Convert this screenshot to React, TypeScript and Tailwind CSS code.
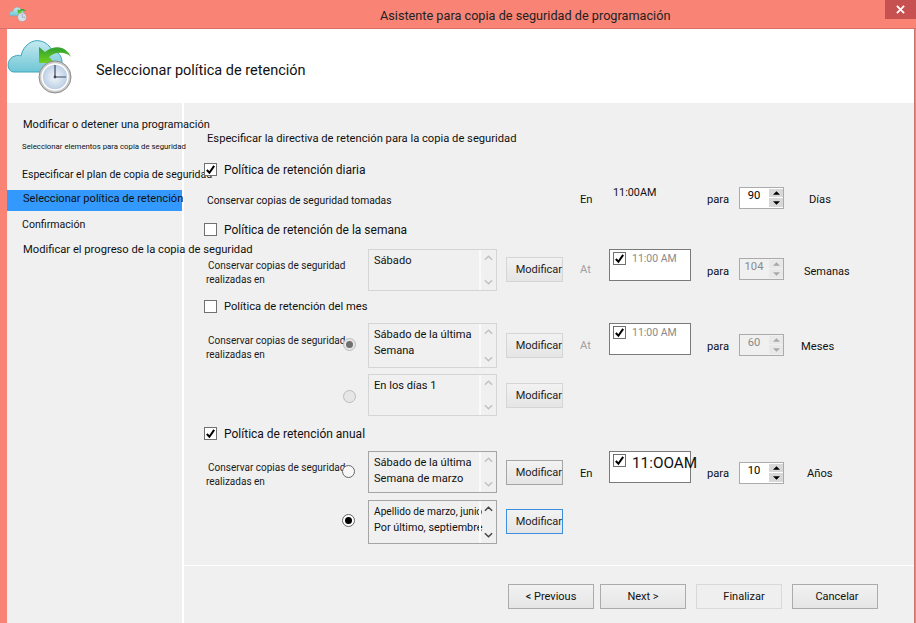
import { ReactNode } from "react";

function BackupIcon({ className }: { className: string }) {
  return (
    <svg viewBox="0 0 66 54" className={className}>
      <defs>
        <linearGradient id="cloud" x1="0" y1="0" x2="0" y2="1">
          <stop offset="0" stopColor="#c4eaf0" />
          <stop offset="1" stopColor="#6fc6d6" />
        </linearGradient>
        <linearGradient id="arrow" x1="0" y1="0" x2="0" y2="1">
          <stop offset="0" stopColor="#2f9e2f" />
          <stop offset="1" stopColor="#6fd01f" />
        </linearGradient>
        <radialGradient id="face">
          <stop offset="0" stopColor="#f4f7fb" />
          <stop offset="1" stopColor="#b9cde4" />
        </radialGradient>
      </defs>
      <path
        d="M7 32 C-1 32 -1 18 8 16 C10 15 12 15 14 16 C16 5 26 -1 33 1 C39 2 43 6 45 11 C51 11 55 16 55 22 C55 28 52 32 48 32 Z"
        fill="url(#cloud)"
        stroke="#3fa6bd"
        strokeWidth="1"
      />
      <path d="M32 7 L32 23 L48 23 L42 17 C47 12 58 11 64 17 C60 8 50 3 38 12 Z" fill="url(#arrow)" />
      <circle cx="48" cy="37" r="16" fill="#c9c9c9" stroke="#8d8d8d" strokeWidth="1" />
      <circle cx="48" cy="37" r="13" fill="url(#face)" stroke="#ffffff" strokeWidth="1.5" />
      <path d="M48 25 V37 H59" fill="none" stroke="#3b4a63" strokeWidth="1.2" />
      <circle cx="48" cy="37" r="1.4" fill="#3b4a63" />
    </svg>
  );
}

function Check({ className }: { className: string }) {
  return (
    <svg viewBox="0 0 12 12" className={className}>
      <path d="M2 6.5 L4.8 9.5 L10 2" fill="none" stroke="#000" strokeWidth="2.2" />
    </svg>
  );
}

function CheckBox({ checked }: { checked?: boolean }) {
  return (
    <span className="flex w-[13px] h-[13px] shrink-0 items-center justify-center border border-[#707070] bg-white">
      {checked && <Check className="w-[11px] h-[11px]" />}
    </span>
  );
}

function Radio({ state }: { state: "on" | "off" | "disabledOn" | "disabledOff" }) {
  const ring =
    state === "on"
      ? "border-[#666] bg-white"
      : state === "off"
        ? "border-[#666] bg-[#f7f7f7]"
        : "border-[#bcbcbc] bg-[#e6e6e6]";
  return (
    <span className={"flex w-[13px] h-[13px] items-center justify-center rounded-full border " + ring}>
      {state === "on" && <span className="w-[7px] h-[7px] rounded-full bg-black" />}
      {state === "disabledOn" && <span className="w-[7px] h-[7px] rounded-full bg-[#707070]" />}
    </span>
  );
}

function ListBox({
  lines,
  dark,
  className,
  small,
}: {
  lines: ReactNode[];
  dark?: boolean;
  className: string;
  small?: boolean;
}) {
  return (
    <div
      className={
        "relative flex w-[129px] shrink-0 border bg-[#f0f0f0] " +
        (dark ? "border-[#a5a5a5] " : "border-[#d5d5d5] ") +
        className
      }
    >
      <div className="w-[110px] shrink-0 pl-[5px] pt-[3px] text-[11.1px] leading-[16px] text-[#111] whitespace-nowrap">
        {small ? (
          <>
            <div className="text-[10.2px] leading-[16px]">{lines[0]}</div>
            <div className="text-[10.8px]">{lines[1]}</div>
          </>
        ) : (
          lines.map((l, i) => <div key={i}>{l}</div>)
        )}
      </div>
      <div className="flex w-[17px] shrink-0 flex-col items-center justify-between border-l-2 border-[#fafafa] py-[5px]">
        <svg viewBox="0 0 10 6" className="w-[9px] h-[6px]">
          <path d="M1 5 L5 1 L9 5" fill="none" stroke={small ? "#444" : "#c0c0c0"} strokeWidth="1.6" />
        </svg>
        <svg viewBox="0 0 10 6" className="w-[9px] h-[6px]">
          <path d="M1 1 L5 5 L9 1" fill="none" stroke={small ? "#444" : "#c0c0c0"} strokeWidth="1.6" />
        </svg>
      </div>
    </div>
  );
}

function ModifyButton({ className }: { className: string }) {
  return (
    <div
      className={
        "flex w-[57px] h-[25px] shrink-0 items-center justify-end pt-[2px] border bg-gradient-to-b from-[#f2f2f2] to-[#e5e5e5] text-[11px] text-[#222] " +
        className
      }
    >
      Modificar
    </div>
  );
}

function Spinner({ value, disabled, className }: { value: string; disabled?: boolean; className: string }) {
  const arrow = disabled ? "#a8a8a8" : "#000";
  return (
    <div
      className={
        "flex w-[45px] h-[22px] shrink-0 items-start border border-[#ababab] " +
        (disabled ? "bg-[#f0f0f0] text-[#8a8a8a] " : "bg-white text-black ") +
        className
      }
    >
      <span className="w-[28px] text-center text-[11.2px] leading-[16px]">{value}</span>
      <span className="ml-[1px] mt-[1px] flex w-[14px] flex-col gap-[1px]">
        <span className={"flex h-[8px] items-center justify-center " + (disabled ? "bg-[#e8e8e8]" : "bg-[#d8d8d8]")}>
          <svg viewBox="0 0 8 4" className="w-[7px] h-[4px]">
            <path d="M0 4 L4 0 L8 4 Z" fill={arrow} />
          </svg>
        </span>
        <span className={"flex h-[9px] items-center justify-center " + (disabled ? "bg-[#e8e8e8]" : "bg-[#d8d8d8]")}>
          <svg viewBox="0 0 8 4" className="w-[7px] h-[4px]">
            <path d="M0 0 L8 0 L4 4 Z" fill={arrow} />
          </svg>
        </span>
      </span>
    </div>
  );
}

function TimeBox({ large }: { large?: boolean }) {
  return (
    <div className="flex w-[82px] h-[32px] shrink-0 items-start gap-[6px] border border-[#7a7a7a] bg-white pl-[3px] pt-[2px] whitespace-nowrap">
      <CheckBox checked />
      {large ? (
        <span className="text-[15.3px] leading-[18px] text-[#111]">11:OOAM</span>
      ) : (
        <span className="text-[10.5px] leading-[14px] text-[#8a8a8a]">11:00 AM</span>
      )}
    </div>
  );
}

function KeepLabel({ className }: { className: string }) {
  return (
    <div className={"text-[10px] leading-[14px] text-[#1a1a1a] whitespace-nowrap " + className}>
      <div className="pl-[4px]">Conservar copias de seguridad</div>
      <div className="pl-[2px]">realizadas en</div>
    </div>
  );
}

const navItems = [
  { label: "Modificar o detener una programación", cls: "h-[22px] pt-[2px] pl-[16px] text-[11px]" },
  { label: "Seleccionar elementos para copia de seguridad", cls: "h-[22px] pt-[2px] pl-[15px] text-[7.8px]" },
  { label: "Especificar el plan de copia de seguridad", cls: "h-[33px] pt-[3px] pl-[15px] text-[10.5px]" },
  { label: "Seleccionar política de retención", cls: "h-[21px] pb-[2px] pl-[16px] text-[11.1px] bg-[#3399ff]" },
  { label: "Confirmación", cls: "h-[26px] pt-[2px] pl-[15px] text-[10.6px]" },
  { label: "Modificar el progreso de la copia de seguridad", cls: "h-[24px] pt-[2px] pl-[16px] text-[11.2px]" },
];

export default function App() {
  return (
    <div className="flex h-[623px] w-[916px] flex-col overflow-hidden bg-[#f98375] font-['Roboto',sans-serif] text-[#111]">
      {/* Barra de titulo */}
      <div className="relative flex h-[29px] shrink-0 items-start border-b border-[#d9736a]">
        <BackupIcon className="ml-[9px] mt-[6px] h-[17px] w-[18px]" />
        <div className="flex-1 pt-[7px] pl-[353px] text-[12.7px] leading-[18px] text-[#222] whitespace-nowrap">
          Asistente para copia de seguridad de programación
        </div>
        <div className="flex h-[19px] w-[31px] items-center justify-center bg-[#c75050]">
          <svg viewBox="0 0 10 10" className="h-[9px] w-[9px]">
            <path d="M1 1 L9 9 M9 1 L1 9" stroke="#fff" strokeWidth="2" />
          </svg>
        </div>
      </div>

      <div className="ml-[7px] mr-[1px] flex flex-1 flex-col border-r border-[#c9736b]">
        {/* Cabecera */}
        <div className="flex h-[74px] shrink-0 items-start bg-white">
          <BackupIcon className="mt-[11px] h-[54px] w-[66px]" />
          <div className="ml-[23px] mt-[32px] text-[14.5px] leading-[20px]">Seleccionar política de retención</div>
        </div>

        <div className="flex flex-1">
          {/* Pasos */}
          <div className="w-[175px] shrink-0 bg-[#f0f0f0] pt-[10px]">
            {navItems.map((n) => (
              <div key={n.label} className={"relative z-10 flex items-center whitespace-nowrap " + n.cls}>
                {n.label}
              </div>
            ))}
          </div>
          <div className="w-[2px] shrink-0 bg-white" />

          {/* Contenido */}
          <div className="flex flex-1 flex-col bg-[#f0f0f0] pt-[28px]">
            <div className="pl-[23px] text-[11.2px] leading-[16px] whitespace-nowrap">
              Especificar la directiva de retención para la copia de seguridad
            </div>

            {/* Diaria */}
            <div className="relative z-20 mt-[16px] flex h-[13px] items-center gap-[7px] pl-[20px] text-[12px]">
              <CheckBox checked />
              <span className="pt-[1px]">Política de retención diaria</span>
            </div>
            <div className="mt-[11px] flex h-[22px] text-[11.2px] leading-[14px] whitespace-nowrap">
              <div className="ml-[23px] mt-[7px] w-[373px] text-[10.3px]">Conservar copias de seguridad tomadas</div>
              <div className="mt-[6px] w-[33px]">En</div>
              <div className="-mt-[1px] w-[94px] text-[10.8px]">11:00AM</div>
              <div className="mt-[6px] w-[32px]">para</div>
              <Spinner value="90" className="" />
              <div className="ml-[25px] mt-[6px]">Días</div>
            </div>

            {/* Semana */}
            <div className="mt-[14px] flex h-[13px] items-center gap-[7px] pl-[20px] text-[12px]">
              <CheckBox />
              <span className="pt-[1px]">Política de retención de la semana</span>
            </div>
            <div className="mt-[13px] flex h-[42px] pl-[20px] whitespace-nowrap">
              <KeepLabel className="mt-[10px] w-[164px]" />
              <ListBox lines={["Sábado"]} className="h-[42px]" />
              <ModifyButton className="ml-[9px] mt-[8px] border-[#d5d5d5]" />
              <div className="ml-[17px] mt-[14px] w-[29px] text-[11.2px] leading-[14px] text-[#a0a0a0]">At</div>
              <TimeBox />
              <div className="ml-[16px] mt-[16px] w-[32px] text-[11.2px] leading-[14px]">para</div>
              <Spinner disabled value="104" className="mt-[9px]" />
              <div className="ml-[20px] mt-[16px] text-[11px] leading-[14px]">Semanas</div>
            </div>

            {/* Mes */}
            <div className="mt-[9px] flex h-[13px] items-center gap-[7px] pl-[20px] text-[11.2px]">
              <CheckBox />
              <span className="pt-[2px]">Política de retención del mes</span>
            </div>
            <div className="mt-[10px] flex h-[45px] pl-[20px] whitespace-nowrap">
              <KeepLabel className="mt-[11px] w-[139px]" />
              <div className="mt-[15px] w-[25px]">
                <Radio state="disabledOn" />
              </div>
              <ListBox lines={["Sábado de la última", "Semana"]} className="h-[45px]" />
              <ModifyButton className="ml-[9px] mt-[10px] border-[#d5d5d5]" />
              <div className="ml-[17px] mt-[16px] w-[29px] text-[11.2px] leading-[14px] text-[#a0a0a0]">At</div>
              <TimeBox />
              <div className="ml-[16px] mt-[17px] w-[32px] text-[11.2px] leading-[14px]">para</div>
              <Spinner disabled value="60" className="mt-[11px]" />
              <div className="ml-[17px] mt-[17px] text-[11.2px] leading-[14px]">Meses</div>
            </div>
            <div className="mt-[6px] flex h-[42px] pl-[159px]">
              <div className="mt-[16px] w-[25px]">
                <Radio state="disabledOff" />
              </div>
              <ListBox lines={["En los días 1"]} className="h-[42px]" />
              <ModifyButton className="ml-[9px] mt-[9px] border-[#d5d5d5]" />
            </div>

            {/* Anual */}
            <div className="mt-[11px] flex h-[13px] items-center gap-[7px] pl-[20px] text-[12px]">
              <CheckBox checked />
              <span className="pt-[1px]">Política de retención anual</span>
            </div>
            <div className="mt-[11px] flex h-[42px] pl-[20px] whitespace-nowrap">
              <KeepLabel className="mt-[10px] w-[138px] text-[10.3px]" />
              <div className="mt-[14px] w-[26px]">
                <Radio state="off" />
              </div>
              <ListBox dark lines={["Sábado de la última", "Semana de marzo"]} className="h-[42px]" />
              <ModifyButton className="ml-[9px] mt-[9px] border-[#a5a5a5]" />
              <div className="ml-[17px] mt-[16px] w-[29px] text-[11.2px] leading-[14px]">En</div>
              <TimeBox large />
              <div className="ml-[16px] mt-[16px] w-[32px] text-[11.2px] leading-[14px]">para</div>
              <Spinner value="10" className="mt-[11px]" />
              <div className="ml-[23px] mt-[16px] text-[11.2px] leading-[14px]">Años</div>
            </div>
            <div className="mt-[7px] flex h-[44px] pl-[158px]">
              <div className="mt-[14px] w-[26px]">
                <Radio state="on" />
              </div>
              <ListBox
                dark
                small
                lines={["Apellido de marzo, junio", "Por último, septiembre"]}
                className="h-[44px]"
              />
              <ModifyButton className="ml-[9px] mt-[9px] border-[#3c8fdc]" />
            </div>

            {/* Botones */}
            <div className="mt-[21px] h-[1px] bg-white" />
            <div className="mt-[18px] flex gap-[6px] pl-[324px] text-[11px]">
              <div className="flex h-[25px] w-[86px] items-center justify-center border border-[#ababab] bg-gradient-to-b from-[#f2f2f2] to-[#e5e5e5] pt-[2px]">
                {"< Previous"}
              </div>
              <div className="flex h-[25px] w-[86px] items-center justify-center border border-[#ababab] bg-gradient-to-b from-[#f2f2f2] to-[#e5e5e5] pt-[2px]">
                {"Next >"}
              </div>
              <div className="ml-[4px] flex h-[25px] w-[86px] items-center justify-center border border-[#d9d9d9] bg-[#efefef] pl-[10px] pt-[2px]">
                Finalizar
              </div>
              <div className="ml-[4px] flex h-[25px] w-[86px] items-center justify-center border border-[#ababab] bg-gradient-to-b from-[#f2f2f2] to-[#e5e5e5] pl-[4px] pt-[2px]">
                Cancelar
              </div>
            </div>
          </div>
        </div>
      </div>
    </div>
  );
}
